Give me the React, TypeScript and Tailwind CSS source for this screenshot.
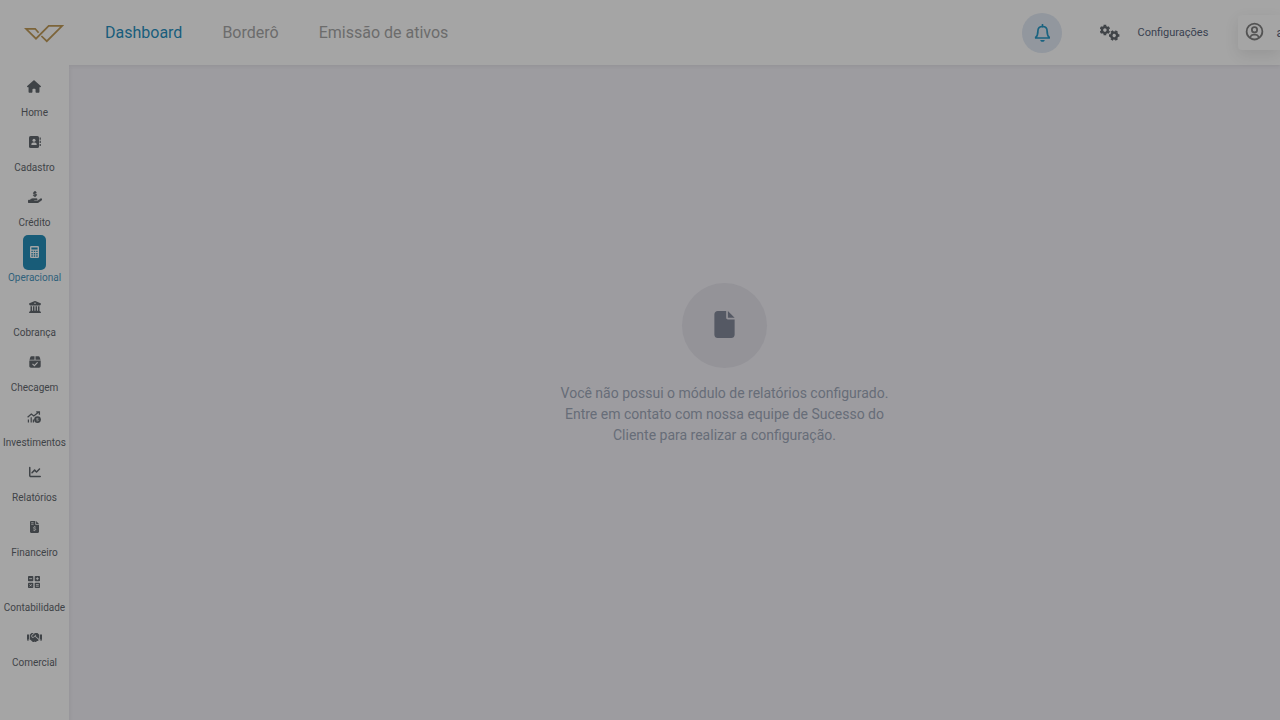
import type { ReactNode } from "react";
import {
  FaBuildingColumns,
  FaChartLine,
  FaFile,
  FaHandHoldingDollar,
  FaHouse,
} from "react-icons/fa6";
import { FaHandshake } from "react-icons/fa";
import { BiUserCircle } from "react-icons/bi";

function Logo() {
  return (
    <svg width="40" height="21" viewBox="0 0 40 21" fill="none" stroke="#7c6439" strokeWidth="1.700">
      <path d="M14.600 10.800 11.200 6.800H2L12 16.700 24.700 3.800H38.200L22.800 19.200 17.400 14" />
    </svg>
  );
}

function Bell() {
  return (
    <svg width="16" height="18" viewBox="0 0 16 18" fill="none" stroke="currentColor" strokeWidth="1.700">
      <path d="M8.500.7v2" strokeLinecap="round" />
      <path
        d="M8.500 2.500c-3 0-4.600 1.800-4.600 4.400 0 3.600-.7 5.200-2.200 6.500v.6h13.600v-.6c-1.500-1.300-2.200-2.900-2.200-6.500 0-2.600-1.600-4.400-4.600-4.400Z"
        strokeLinejoin="round"
      />
      <path d="M6.200 15.900h4.600c-.3 1.200-1.200 1.900-2.300 1.900s-2-.7-2.300-1.900Z" fill="currentColor" stroke="none" />
    </svg>
  );
}

function Gears() {
  return (
    <svg width="20" height="18" viewBox="0 0 20 18" fill="none" stroke="#3f4347">
      <g transform="translate(4.900 6)">
        <circle r="2.900" strokeWidth="2.400" />
        <path
          d="M0-3.700v-1.500M0 3.700v1.500M3.200-1.850l1.300-.75M-3.200-1.850l-1.300-.75M3.200 1.850l1.300.75M-3.200 1.850l-1.300.75"
          strokeWidth="2.700"
        />
      </g>
      <g transform="translate(14.200 11.500) rotate(30)">
        <circle r="2.900" strokeWidth="2.400" />
        <path
          d="M0-3.700v-1.500M0 3.700v1.500M3.200-1.850l1.300-.75M-3.200-1.850l-1.300-.75M3.200 1.850l1.300.75M-3.200 1.850l-1.300.75"
          strokeWidth="2.700"
        />
      </g>
    </svg>
  );
}

function ContactBook() {
  return (
    <svg width="12" height="12" viewBox="0 0 12 12" fill="#3f4347">
      <rect width="10" height="12" rx="1.600" />
      <path d="M10.600 1.500h1.200v2.200h-1.200ZM10.600 4.700h1.200v2.200h-1.200ZM10.600 7.900h1.200v2.200h-1.200Z" />
      <circle cx="5" cy="4.200" r="1.500" fill="#a5a5a5" />
      <path d="M2.300 8.900c0-1.600.9-2.400 2-2.400h1.400c1.100 0 2 .8 2 2.400Z" fill="#a5a5a5" />
    </svg>
  );
}

function Calculator() {
  return (
    <svg width="9" height="12" viewBox="0 0 9 12" fill="#a5a5a5">
      <rect width="9" height="12" rx="1.200" />
      <path
        d="M1.400 1.400h6.200v2H1.400ZM1.400 4.700h1.400v1.400H1.400ZM3.800 4.700h1.400v1.400H3.800ZM6.200 4.700h1.400v1.400H6.200ZM1.400 7h1.400v1.400H1.400ZM3.800 7h1.400v1.400H3.800ZM6.200 7h1.400v1.400H6.200ZM1.400 9.300h1.400v1.400H1.400ZM3.800 9.300h1.400v1.400H3.800ZM6.200 9.300h1.400v1.400H6.200Z"
        fill="#185c78"
      />
    </svg>
  );
}

function CheckedBox() {
  return (
    <svg width="12" height="12" viewBox="0 0 12 12" fill="#3f4347">
      <path d="M2.600.3h2.900V3.700H.5L1.200 1.400C1.400.7 1.900.3 2.600.3Z" />
      <path d="M6.500.3h2.900c.7 0 1.200.4 1.400 1.100l.7 2.300h-5Z" />
      <path d="M.3 4.400h11.400V10c0 1-.6 1.700-1.600 1.700H1.900C.9 11.700.3 11 .3 10Z" />
      <path d="m3.500 7.900 1.900 1.700 3.200-3.300" fill="none" stroke="#a5a5a5" strokeWidth="1.200" />
    </svg>
  );
}

function Investments() {
  return (
    <svg width="14" height="12" viewBox="0 0 14 12" fill="none" stroke="#3f4347" strokeWidth="1.300">
      <path d="M.6 6.200 4.300 3l2.500 2L11.800 1M9.200.8h3.200v3" />
      <path d="M1.400 8.500v3M4.200 6.200v5.300M6.400 8.500v3" strokeWidth="1.200" />
      <circle cx="10.500" cy="8.600" r="3.400" fill="#3f4347" stroke="none" />
      <path d="M11.400 7.400h-1.300c-.8 0-.8 1.200 0 1.200h.6c.9 0 .9 1.200 0 1.200H9.500" stroke="#a5a5a5" strokeWidth=".7" />
    </svg>
  );
}

function Invoice() {
  return (
    <svg width="9" height="12" viewBox="0 0 9 12" fill="#3f4347">
      <path d="M1.200 0H5.300v3.700H9v7.100c0 .7-.5 1.200-1.200 1.200H1.200C.5 12 0 11.500 0 10.800V1.200C0 .5.500 0 1.200 0ZM6.100 0 9 2.900H6.100Z" />
      <path
        d="M1.200 1.700h2.400M1.200 3.300h2.400M5.800 6.100H4.300c-1.100 0-1.100 1.500 0 1.500h.6c1.100 0 1.100 1.500 0 1.500H3.200M4.600 5.200v.9M4.600 9.100v1"
        fill="none"
        stroke="#a5a5a5"
        strokeWidth=".75"
      />
    </svg>
  );
}

function Accounting() {
  return (
    <svg width="12" height="12" viewBox="0 0 12 12" fill="#3f4347">
      <rect width="5.300" height="5.300" rx=".8" />
      <rect x="6.700" width="5.300" height="5.300" rx=".8" />
      <rect y="6.700" width="5.300" height="5.300" rx=".8" />
      <rect x="6.700" y="6.700" width="5.300" height="5.300" rx=".8" />
      <path
        d="M1.200 2.650h2.900M7.900 2.650h2.900M9.350 1.200v2.900M1.600 8.300l2.100 2.100M3.700 8.300l-2.100 2.100M7.900 8.600h2.900M7.900 10.200h2.900"
        stroke="#a5a5a5"
        strokeWidth=".85"
      />
    </svg>
  );
}

interface NavItem {
  label: string;
  icon: ReactNode;
  active?: boolean;
}

const items: NavItem[] = [
  { label: "Home", icon: <FaHouse className="mb-px h-[13px] w-[14px]" /> },
  { label: "Cadastro", icon: <ContactBook /> },
  {
    label: "Crédito",
    icon: <FaHandHoldingDollar className="h-3 w-[14px]" preserveAspectRatio="none" stroke="currentColor" strokeWidth={14} />,
  },
  { label: "Operacional", icon: <Calculator />, active: true },
  { label: "Cobrança", icon: <FaBuildingColumns size={12} /> },
  { label: "Checagem", icon: <CheckedBox /> },
  { label: "Investimentos", icon: <Investments /> },
  { label: "Relatórios", icon: <FaChartLine size={12} /> },
  { label: "Financeiro", icon: <Invoice /> },
  { label: "Contabilidade", icon: <Accounting /> },
  { label: "Comercial", icon: <FaHandshake size={15} /> },
];

export default function App() {
  return (
    <div className="flex h-[720px] w-[1280px] flex-col overflow-hidden bg-[#9d9ca0] font-[Roboto,sans-serif]">
      <header className="z-10 flex h-[65px] shrink-0 items-center bg-[#a5a5a5] pl-6 shadow-[0_1px_4px_rgba(0,0,0,0.08)]">
        <Logo />
        <nav className="ml-[41px] flex gap-10 text-base leading-6 text-[#6c6c6c]">
          <span className="text-[#185d7c]">Dashboard</span>
          <span>Borderô</span>
          <span>Emissão de ativos</span>
        </nav>
        <div className="ml-auto flex h-full shrink-0 items-center">
          <div className="flex size-10 items-center justify-center rounded-full bg-[#92979e] text-[#1a6380]">
            <Bell />
          </div>
          <div className="ml-[38px] w-5">
            <Gears />
          </div>
          <span className="ml-[17.5px] w-[70.5px] text-[11px] leading-4 text-[#394150]">Configurações</span>
          <div className="ml-[30px] flex h-[35px] w-[42px] items-center rounded-l bg-[#a5a5a5] pb-[2px] pl-[6px] text-[#535353] shadow-[0_5px_15px_rgba(0,0,0,0.09)]">
            <BiUserCircle size={21} className="shrink-0" />
            <span className="ml-[11.5px] mt-[2px] text-xs text-[#394150]">a</span>
          </div>
        </div>
      </header>
      <div className="flex min-h-0 flex-1">
        <aside className="z-20 flex w-[69px] shrink-0 flex-col items-center bg-[#a5a5a5] pt-[5px] shadow-[1px_3px_4px_rgba(0,0,0,0.06)]">
          {items.map((item) => (
            <div key={item.label} className="flex h-[55px] flex-col items-center">
              <div
                className={
                  item.active
                    ? "flex h-[35px] w-[23px] items-center justify-center rounded-[5px] bg-[#185c78] pb-px text-[#a5a5a5]"
                    : "flex h-[35px] items-center justify-center pb-px text-[#3f4347]"
                }
              >
                {item.icon}
              </div>
              <span
                className={
                  item.active
                    ? "text-[10px] leading-[15px] text-[#30617b]"
                    : "text-[10px] leading-[15px] text-[#3f4347]"
                }
              >
                {item.label}
              </span>
            </div>
          ))}
        </aside>
        <main className="flex w-[1311px] shrink-0 flex-col items-center pt-[218px]">
          <div className="flex size-[85px] items-center justify-center rounded-full bg-[#949398] pb-[2px] text-[#555964]">
            <FaFile size={27} />
          </div>
          <p className="mt-[15px] w-[340px] text-center text-sm leading-[21px] text-[#676d78]">
            Você não possui o módulo de relatórios configurado. Entre em contato com nossa equipe de Sucesso do Cliente
            para realizar a configuração.
          </p>
        </main>
      </div>
    </div>
  );
}
